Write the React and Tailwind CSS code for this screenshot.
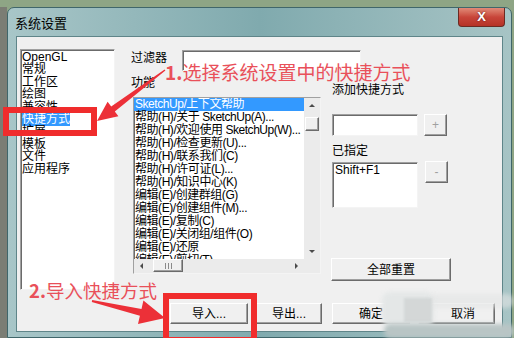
import React from "react";

const ui = { fontFamily: '"Liberation Sans", "Noto Sans CJK SC", sans-serif' };
const red = { fontFamily: '"Noto Sans CJK SC", "Liberation Sans", sans-serif' };

const categories = ["OpenGL", "常规", "工作区", "绘图", "兼容性", "快捷方式", "扩展", "模板", "文件", "应用程序"];

const functions = [
  "SketchUp/上下文帮助",
  "帮助(H)/关于 SketchUp(A)...",
  "帮助(H)/欢迎使用 SketchUp(W)...",
  "帮助(H)/检查更新(U)...",
  "帮助(H)/联系我们(C)",
  "帮助(H)/许可证(L)...",
  "帮助(H)/知识中心(K)",
  "编辑(E)/创建群组(G)",
  "编辑(E)/创建组件(M)...",
  "编辑(E)/复制(C)",
  "编辑(E)/关闭组/组件(O)",
  "编辑(E)/还原",
  "编辑(E)/剪切(T)",
];

const sunken =
  "border border-t-[#a0a0a0] border-l-[#a0a0a0] border-r-[#f4f4f4] border-b-[#f4f4f4] bg-white shadow-[inset_1px_1px_0_#6b6b6b]";
const raised =
  "border border-t-white border-l-white border-r-[#6b6b6b] border-b-[#6b6b6b] bg-[#f0f0f0] shadow-[inset_-1px_-1px_0_#a0a0a0]";

function Btn({ children, className = "", dim }) {
  return (
    <div className={`${raised} flex items-center justify-center text-[12px] ${dim ? "text-[#a0a0a0]" : "text-black"} ${className}`}>
      {children}
    </div>
  );
}

// little scrollbar arrows
function Tri({ dir }) {
  const pts = {
    up: "1,5 4,2 7,5",
    down: "1,3 4,6 7,3",
    left: "5,1 2,4 5,7",
    right: "3,1 6,4 3,7",
  }[dir];
  return (
    <svg width="8" height="8" viewBox="0 0 8 8">
      <polygon points={pts} fill="#4a4a4a" />
    </svg>
  );
}

function FunctionList() {
  return (
    <div className={`${sunken} ml-[2px] mt-[7px] flex h-[177px] w-[188px] flex-col overflow-hidden`}>
      <div className="flex h-[161px]">
        <div className="h-[161px] flex-1 overflow-hidden">
          {functions.map((f, i) => (
            <div
              key={f}
              className={`h-[13px] whitespace-nowrap pl-[1px] text-[12px] leading-[13px] tracking-[-0.45px] ${i === 0 ? "bg-[#3399ff] text-white" : "text-black"}`}
            >
              {f}
            </div>
          ))}
        </div>
        <div className="flex w-[16px] flex-col bg-[#ebebeb]">
          <div className="flex h-[16px] items-center justify-center"><Tri dir="up" /></div>
          <div className={`${raised} mx-px mt-[3px] h-[14px]`} />
          <div className="flex-1" />
          <div className="flex h-[16px] items-center justify-center"><Tri dir="down" /></div>
        </div>
      </div>
      <div className="flex h-[14px] bg-[#ebebeb]">
        <div className="flex w-[16px] items-center justify-center"><Tri dir="left" /></div>
        <div className={`${raised} ml-[3px] flex h-[13px] w-[30px] items-center justify-center gap-[2px]`}>
          <div className="h-[6px] w-px bg-[#8a8a8a]" />
          <div className="h-[6px] w-px bg-[#8a8a8a]" />
          <div className="h-[6px] w-px bg-[#8a8a8a]" />
        </div>
        <div className="flex-1" />
        <div className="flex w-[16px] items-center justify-center"><Tri dir="right" /></div>
        <div className="w-[16px]" />
      </div>
    </div>
  );
}

function Overlay() {
  return (
    <>
      <div className="absolute left-[3px] top-[107px] h-[29px] w-[94px] border-[6px] border-[#f02c2c]" />
      <div className="absolute left-[163px] top-[293px] h-[50px] w-[94px] border-[6px] border-[#f02c2c]" />
      <svg className="absolute left-0 top-0" width="514" height="338">
        <polygon
          points="165.4,70.6 114.8,111.4 118.4,116.2 97,121 107.6,101.8 111.2,106.6 164.6,69.4"
          fill="#ec3038"
        />
        <polygon
          points="91.8,302 139.9,315.7 138,324 165,318 143.4,300.6 141.5,308.9 92.2,300"
          fill="#ec3038"
        />
      </svg>
      <div style={red} className="absolute left-[165px] top-[61px] whitespace-nowrap text-[19px] leading-[21px] text-[#e9505a]">
        <span className="font-bold">1.</span>选择系统设置中的快捷方式
      </div>
      <div style={red} className="absolute left-[29px] top-[280px] whitespace-nowrap text-[18.5px] leading-[21px] text-[#e9505a]">
        <span className="font-bold">2.</span>导入快捷方式
      </div>
      {/* smudged corner of the screenshot */}
      <div className="absolute left-[382px] top-[292px] h-[34px] w-[52px] rounded-[8px] bg-[#e4e7e7] blur-[2px]" />
      <div className="absolute left-[430px] top-[294px] h-[14px] w-[84px] rounded-[8px] bg-[#e2e5e5]/60 blur-[2px]" />
      <div className="absolute left-[404px] top-[298px] h-[24px] w-[28px] bg-[#cfd3d3]/80 blur-[1px]" />
      <div className="absolute left-[384px] top-[324px] h-[14px] w-[130px] rounded-[6px] bg-[#b9c5c5] blur-[2px]" />
    </>
  );
}

export default function App() {
  return (
    <div style={ui} className="relative flex h-[338px] w-[514px] flex-col overflow-hidden bg-[#8ea585]">
      <div className="h-[7px]" />
      <div className="flex flex-1">
        <div className="w-[7px] bg-[#7b7d74]" />
        <div className="flex h-[331px] w-[505px] flex-col rounded-t-[7px] border border-[#40666a] bg-gradient-to-r from-[#a8c6c8] via-[#80aaae] to-[#a7c4c5] px-[8px] pb-[5px]">
          <div className="-mr-[2px] flex h-[28px] items-start justify-between">
            <span className="-ml-px mt-[9px] text-[13px] leading-[14px] text-black">系统设置</span>
            <div className="flex h-[19px] w-[47px] items-center justify-center rounded-b-[4px] border border-t-0 border-[#6b2a22] bg-gradient-to-b from-[#e08a78] via-[#c8453a] to-[#b53226] text-[13px] font-bold text-white [text-shadow:0_0_2px_#5a1a14]">
              X
            </div>
          </div>
          <div className="flex flex-1 flex-col border border-[#5f8589] bg-[#f0f0f0] pl-[3px] pt-[12px] text-[12px] text-black">
            <div className="flex h-[241px]">
              <div className={`${sunken} h-[241px] w-[95px] pl-px pt-px`}>
                {categories.map((c) => (
                  <div key={c} className="h-[12.4px] text-[12px] leading-[12.4px]">
                    <span className={c === "快捷方式" ? "bg-[#3399ff] text-white" : ""}>{c}</span>
                  </div>
                ))}
              </div>
              <div className="ml-[16px] flex flex-col">
                <div className="flex h-[22px] items-start">
                  <span className="mt-[3px] w-[51px] leading-[13px]">过滤器</span>
                  <div className={`${sunken} mt-px h-[21px] w-[179px]`} />
                </div>
                <div className="flex">
                  <div className="flex w-[190px] flex-col">
                    <span className="mt-[6px] h-[13px] leading-[13px]">功能</span>
                    <FunctionList />
                  </div>
                  <div className="ml-[11px] flex flex-col">
                    <span className="mt-[13px] leading-[13px]">添加快捷方式</span>
                    <div className="mt-[17px] flex gap-[6px]">
                      <div className={`${sunken} h-[22px] w-[86px]`} />
                      <Btn dim className="h-[22px] w-[23px]">+</Btn>
                    </div>
                    <span className="mt-[9px] leading-[13px]">已指定</span>
                    <div className="mt-[4px] flex items-start gap-[7px]">
                      <div className={`${sunken} h-[46px] w-[86px] pl-[2px] pt-[1px] leading-[13px]`}>Shift+F1</div>
                      <Btn dim className="-mt-px h-[22px] w-[23px]">-</Btn>
                    </div>
                    <Btn className="-ml-px mt-[50px] h-[23px] w-[120px]">全部重置</Btn>
                  </div>
                </div>
              </div>
            </div>
            <div className="ml-[150px] mt-[13px] flex">
              <Btn className="h-[21px] w-[78px]">导入...</Btn>
              <Btn className="ml-[8px] h-[21px] w-[66px]">导出...</Btn>
              <Btn className="ml-[10px] h-[21px] w-[78px]">确定</Btn>
              <Btn className="ml-[8px] h-[21px] w-[77px] !justify-start pl-[32px]">取消</Btn>
            </div>
          </div>
        </div>
      </div>
      <Overlay />
    </div>
  );
}
